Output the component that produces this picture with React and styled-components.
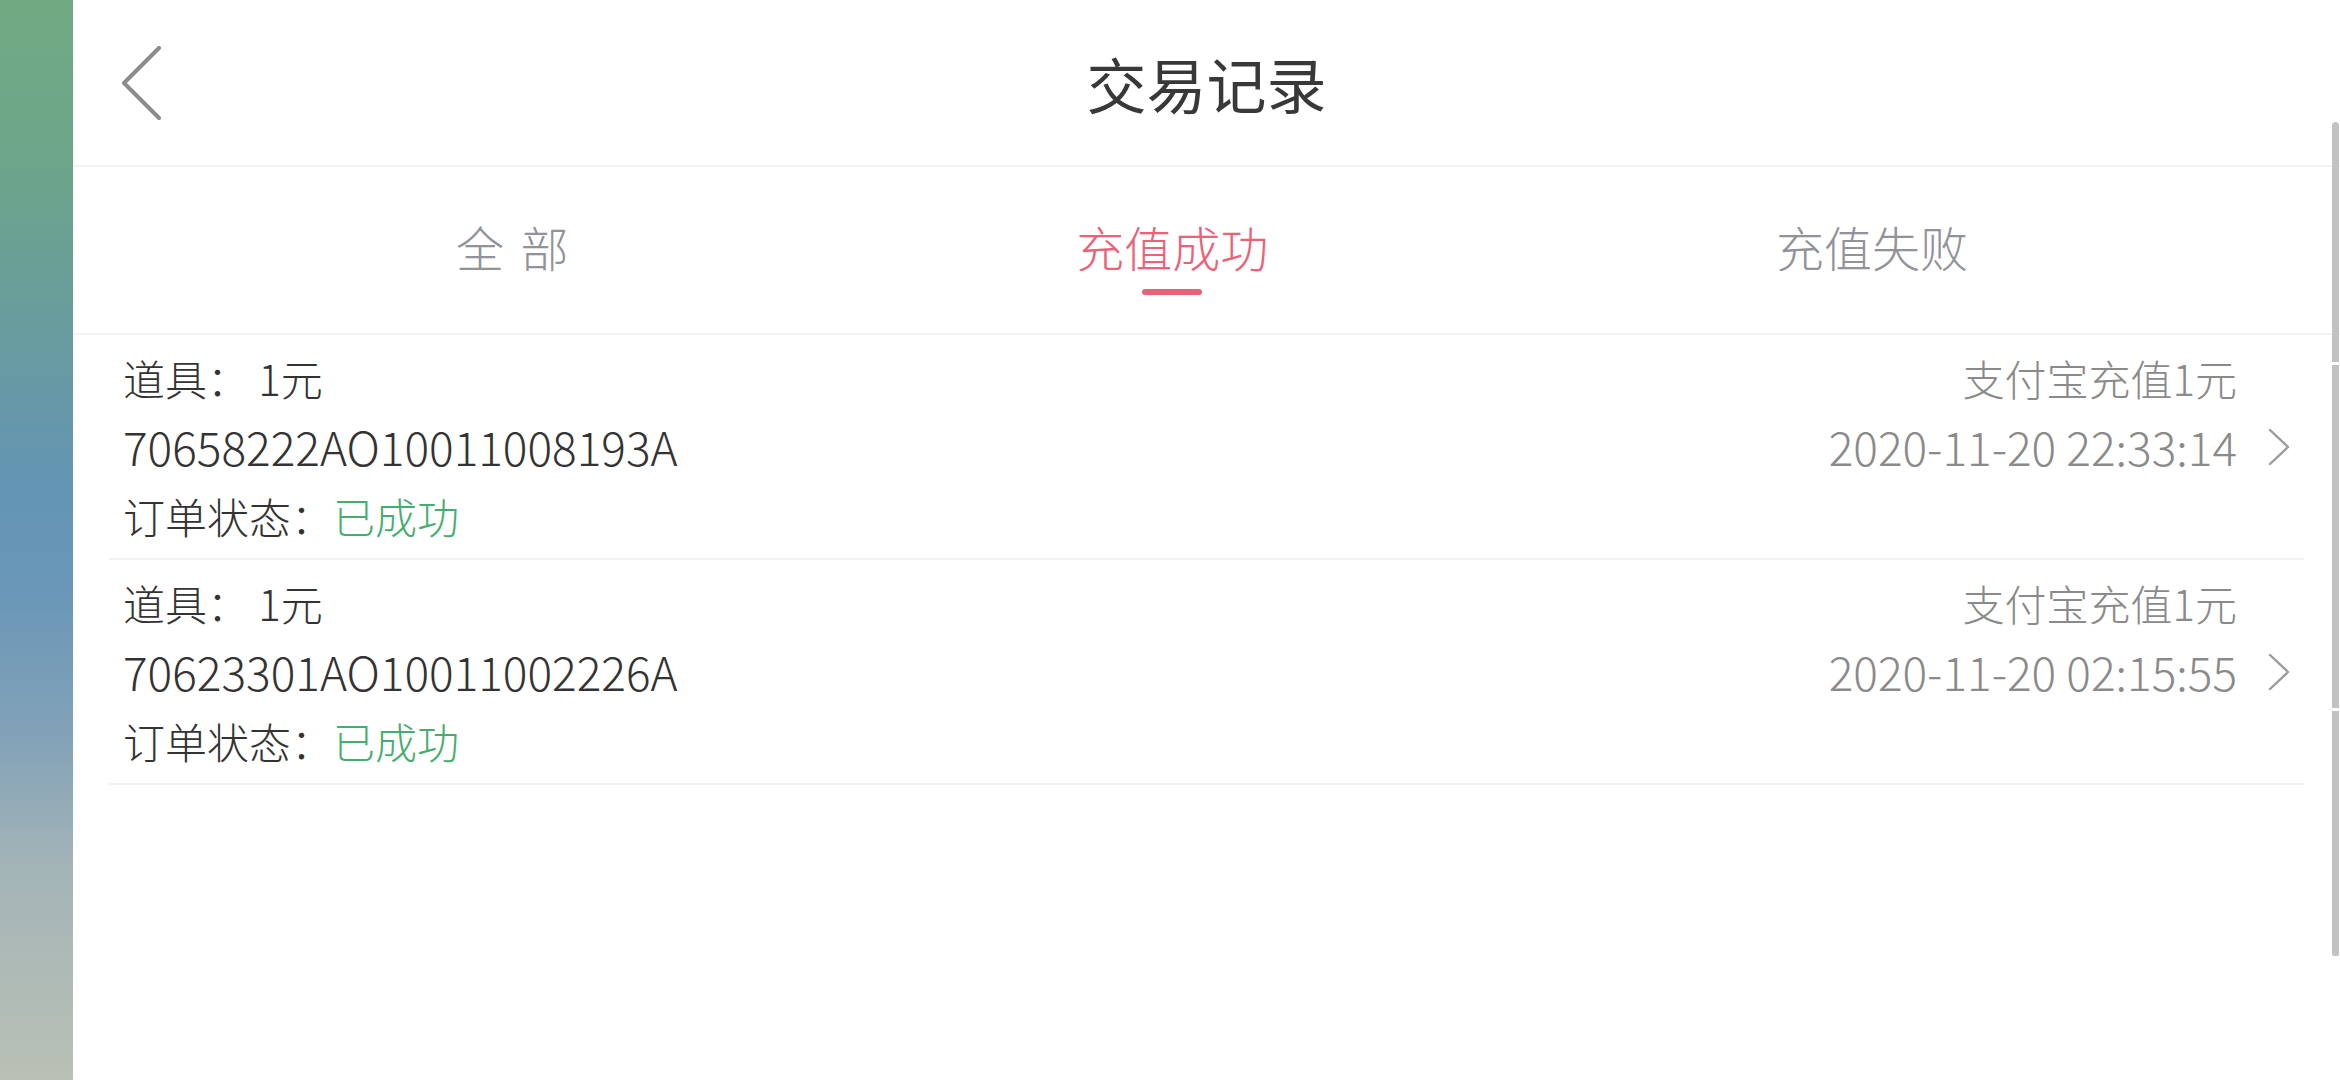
import React, { useState } from "react";
import styled, { createGlobalStyle } from "styled-components";

const GlobalStyle = createGlobalStyle`
  html, body {
    margin: 0;
    padding: 0;
    background: #fff;
  }
  body {
    font-family: "Noto Sans CJK SC", "Noto Sans", sans-serif;
    font-weight: 300;
    color: #333;
  }
`;

const Page = styled.div`
  display: flex;
  width: 2340px;
  height: 1080px;
  overflow: hidden;
`;

const Wallpaper = styled.div`
  width: 73px;
  flex-shrink: 0;
  background: linear-gradient(
    180deg,
    #71aa82 0%,
    #6ca58a 15%,
    #699d9a 28%,
    #6495b4 45%,
    #6a97b7 55%,
    #82a2b8 68%,
    #a3b4b7 80%,
    #b9c0b5 100%
  );
`;

const Main = styled.div`
  flex: 1;
  position: relative;
  background: #fff;
  display: flex;
  flex-direction: column;
`;

const Header = styled.header`
  height: 165px;
  display: grid;
  grid-template-columns: 1fr auto 1fr;
  align-items: center;
  border-bottom: 2px solid #f2f2f4;
`;

const BackButton = styled.button`
  justify-self: start;
  margin-left: 47px;
  padding: 0;
  border: none;
  background: none;
  display: flex;
  align-items: center;
  cursor: pointer;
`;

const Title = styled.h1`
  margin: 0;
  font-size: 60px;
  font-weight: 400;
  color: #383838;
  line-height: 1;
`;

const TabBar = styled.nav`
  height: 166px;
  display: flex;
  padding: 0 118px 0 129px;
  border-bottom: 2px solid #f2f2f4;
`;

const Tab = styled.div`
  flex: 1 1 auto;
  display: flex;
  flex-direction: column;
  align-items: center;
  padding-top: 50px;
  cursor: pointer;
`;

const TabLabel = styled.span`
  font-size: 48px;
  line-height: 58px;
  white-space: pre;
  word-spacing: 6px;
  color: ${({ active }) => (active ? "#ea6278" : "#919398")};
`;

const TabMark = styled.span`
  margin-top: 14px;
  width: 60px;
  height: 6px;
  border-radius: 3px;
  background: ${({ active }) => (active ? "#ea6278" : "transparent")};
`;

const List = styled.div`
  padding: 0 36px;
`;

const Row = styled.div`
  display: flex;
  justify-content: space-between;
  padding: 8px 0 8px 14px;
  border-bottom: 2px solid #f2f2f4;
`;

const Column = styled.div`
  display: flex;
  flex-direction: column;
  font-size: 42px;
  line-height: 69px;
`;

const Line = styled.div`
  white-space: pre;
  color: ${({ muted }) => (muted ? "#8a8a8a" : "#333")};
  font-size: ${({ big }) => (big ? "46px" : "42px")};
`;

const Status = styled.span`
  color: #45ad6f;
`;

const Side = styled.div`
  display: flex;
  align-items: flex-start;
`;

const SideText = styled(Column)`
  align-items: flex-end;
`;

const Arrow = styled.div`
  width: 67px;
  height: 69px;
  margin-top: 69px;
  display: flex;
  align-items: center;
  padding-left: 31px;
  box-sizing: border-box;
`;

const Scrollbar = styled.div`
  position: absolute;
  top: 122px;
  right: 1px;
  width: 7px;
  height: 834px;
  border-radius: 4px 4px 3px 3px;
  background: linear-gradient(
    180deg,
    #c2c2c2 0,
    #c2c2c2 240px,
    #fff 240px,
    #fff 243px,
    #c2c2c2 243px,
    #c2c2c2 586px,
    #fff 586px,
    #fff 589px,
    #c2c2c2 589px
  );
`;

const ChevronLeft = () => (
  <svg width="42" height="74" viewBox="0 0 42 74" fill="none">
    <path d="M39 2 L4 37 L39 72" stroke="#8c8c8c" strokeWidth="4" strokeLinecap="round" strokeLinejoin="round" />
  </svg>
);

const ChevronRight = () => (
  <svg width="22" height="38" viewBox="0 0 22 38" fill="none">
    <path d="M2 2 L20 19 L2 36" stroke="#9a9a9a" strokeWidth="2.4" strokeLinecap="round" strokeLinejoin="round" />
  </svg>
);

const TABS = ["全 部", "充值成功", "充值失败"];

const RECORDS = [
  { item: "1元", order: "70658222AO10011008193A", desc: "支付宝充值1元", time: "2020-11-20 22:33:14" },
  { item: "1元", order: "70623301AO10011002226A", desc: "支付宝充值1元", time: "2020-11-20 02:15:55" },
];

const App = () => {
  const [tab, setTab] = useState(1);

  return (
    <>
      <GlobalStyle />
      <Page>
        <Wallpaper />
        <Main>
          <Header>
            <BackButton aria-label="返回">
              <ChevronLeft />
            </BackButton>
            <Title>交易记录</Title>
            <div />
          </Header>
          <TabBar>
            {TABS.map((label, i) => (
              <Tab key={label} onClick={() => setTab(i)}>
                <TabLabel active={tab === i}>{label}</TabLabel>
                <TabMark active={tab === i} />
              </Tab>
            ))}
          </TabBar>
          <List>
            {RECORDS.map((r) => (
              <Row key={r.order}>
                <Column>
                  <Line>道具： {r.item}</Line>
                  <Line big>{r.order}</Line>
                  <Line>
                    订单状态：<Status>已成功</Status>
                  </Line>
                </Column>
                <Side>
                  <SideText>
                    <Line muted>{r.desc}</Line>
                    <Line muted big>{r.time}</Line>
                  </SideText>
                  <Arrow>
                    <ChevronRight />
                  </Arrow>
                </Side>
              </Row>
            ))}
          </List>
          <Scrollbar />
        </Main>
      </Page>
    </>
  );
};

export default App;
